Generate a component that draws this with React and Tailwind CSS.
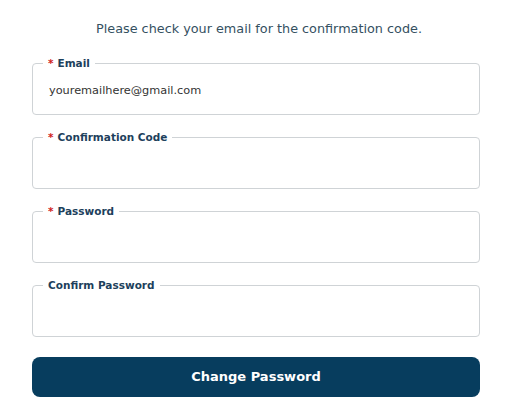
import React from 'react';

const fields = [
    { label: 'Email', required: true, value: 'youremailhere@gmail.com' },
    { label: 'Confirmation Code', required: true, value: '' },
    { label: 'Password', required: true, value: '' },
    { label: 'Confirm Password', required: false, value: '' },
];

function Field({ label, required, value }) {
    return (
        <fieldset className="h-[59px] rounded-[4px] border-[1.5px] border-[#cfd3d6] px-[10px]">
            <legend className="px-[5px] text-[10.5px] font-bold leading-[14px] text-[#1d3f5c]">
                {required && <span className="mr-[4px] text-[#d0201b]">*</span>}
                {label}
            </legend>
            <div className="pl-[6px] pt-[13px] text-[11.3px] text-[#333]">{value}</div>
        </fieldset>
    );
}

export default function App() {
    return (
        <div className="h-[416px] w-[518px] bg-white font-['DejaVu_Sans',sans-serif]">
            <p className="pt-[19px] text-center text-[12.8px] text-[#34505f]">
                Please check your email for the confirmation code.
            </p>
            <div className="ml-[32px] mt-[18px] flex w-[448px] flex-col gap-[15px]">
                {fields.map((f) => (
                    <Field key={f.label} {...f} />
                ))}
                <button className="mt-[5px] h-[40px] rounded-[8px] bg-[#073d5e] text-[13px] font-bold text-white">
                    Change Password
                </button>
            </div>
        </div>
    );
}
